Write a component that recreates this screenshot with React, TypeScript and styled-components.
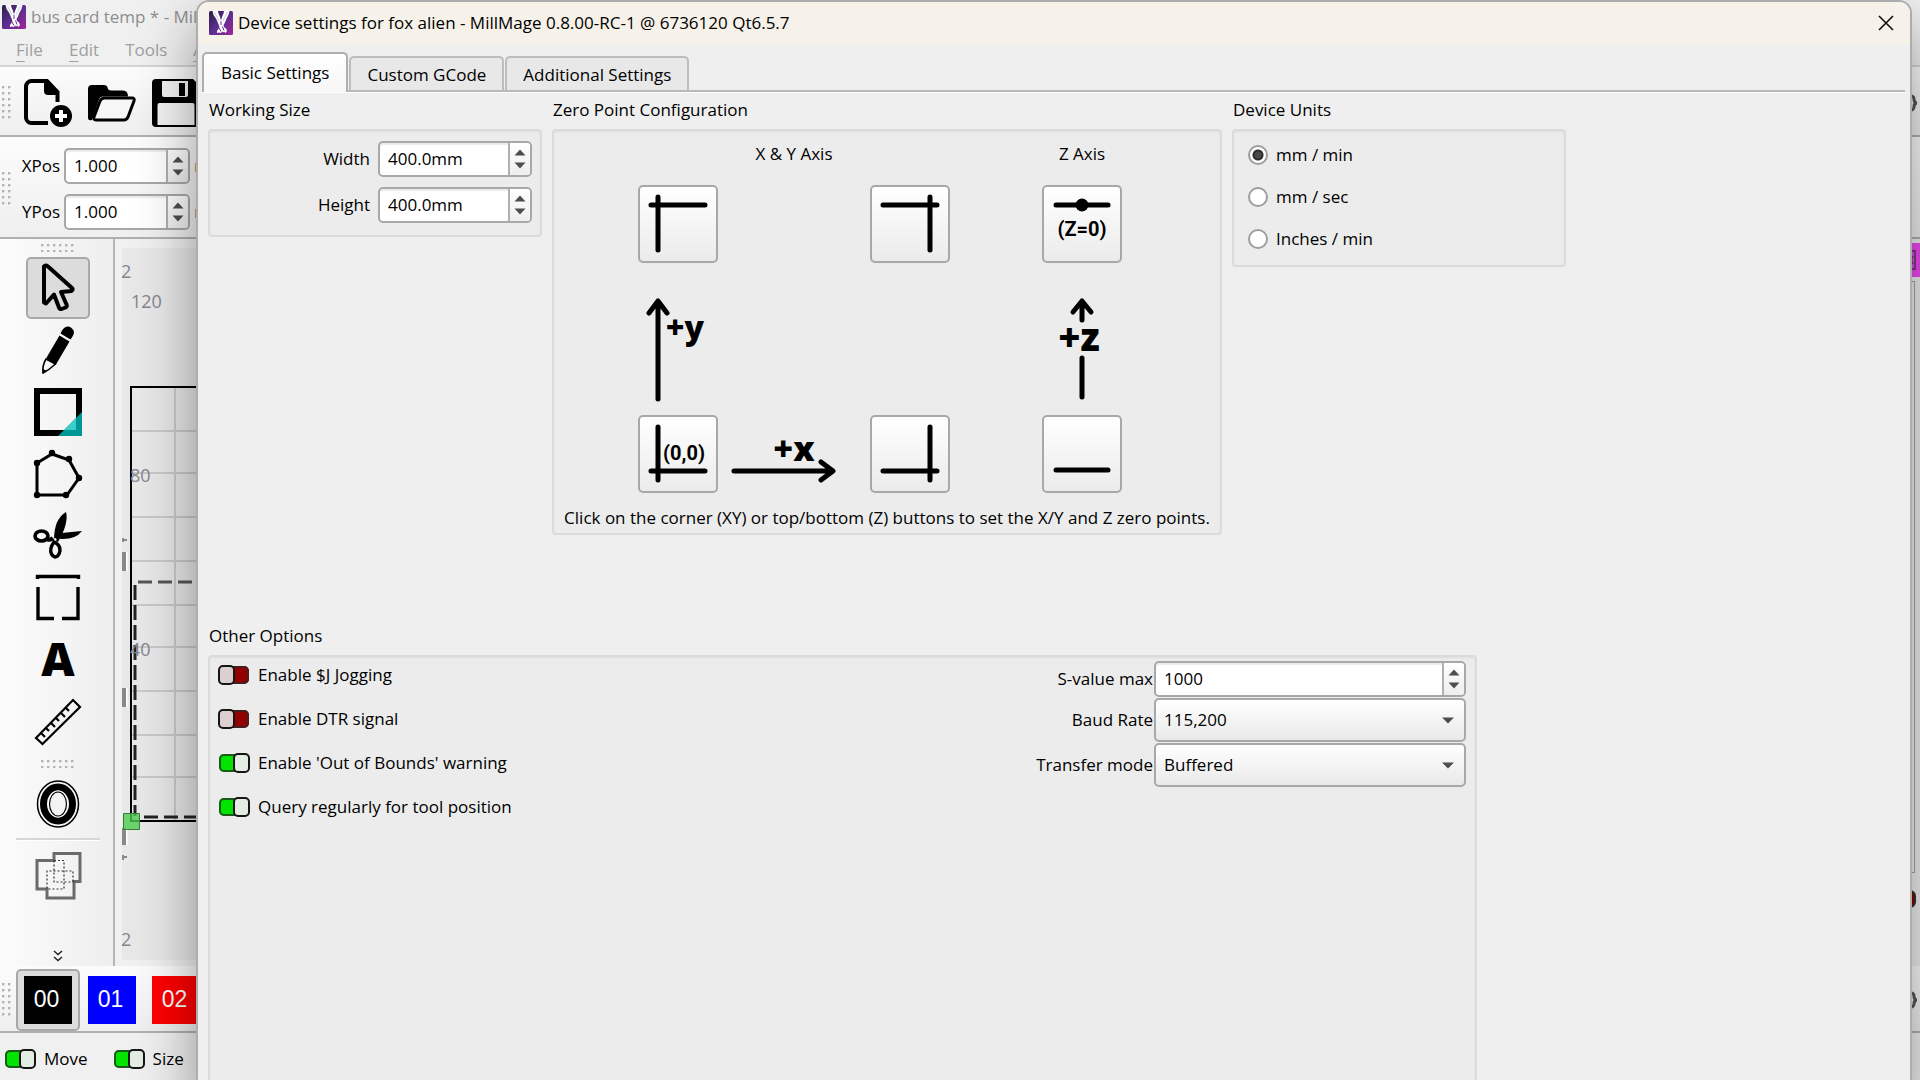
import React, { ReactNode } from "react";
import styled, { createGlobalStyle, css } from "styled-components";

const GlobalStyle = createGlobalStyle`
  *, *::before, *::after { box-sizing: border-box; }
  html, body { margin: 0; padding: 0; overflow: hidden; }
  body, button, input, select {
    font-family: "Open Sans", "Noto Sans", sans-serif;
    font-size: 17px;
    line-height: 24px;
    color: #000;
  }
  fieldset { border: 0; margin: 0; padding: 0; min-width: 0; }
  button { padding: 0; cursor: pointer; }
`;

/* ---------- main window ---------- */

const Desktop = styled.div`
  position: relative;
  height: 100vh;
  overflow: hidden;
  background: #f0f0f0;
`;

const MainWindow = styled.div`
  display: flex;
  flex-direction: column;
  height: 100%;
`;

const MainTitle = styled.header`
  display: flex;
  align-items: center;
  gap: 5px;
  height: 34px;
  padding-left: 2px;
  color: #8e8e8e;
  white-space: nowrap;
`;

const MenuBar = styled.nav`
  display: flex;
  align-items: center;
  gap: 26px;
  height: 33px;
  padding-left: 16px;
  border-bottom: 2px solid #d4d4d4;
`;

const MenuItem = styled.button`
  border: 0;
  background: none;
  color: #a0a0a0;
  u { text-underline-offset: 5px; text-decoration-thickness: 1px; }
`;

const Toolbar = styled.div<{ $height: number; $gap?: number }>`
  display: flex;
  align-items: center;
  gap: ${(p) => p.$gap ?? 12}px;
  height: ${(p) => p.$height}px;
  padding: 3px 2px 0;
  background: linear-gradient(#fcfcfc, #efefef);
  border-bottom: 2px solid #b0b0b0;
`;

const Handle = styled.div<{ $wide?: boolean }>`
  flex: none;
  width: ${(p) => (p.$wide ? 34 : 10)}px;
  height: ${(p) => (p.$wide ? 8 : 34)}px;
  background-image: radial-gradient(circle at 1px 1px, #b4b4b4 1px, transparent 2px);
  background-size: 6px 6px;
`;

const IconRow = styled.div`
  display: flex;
  gap: 16px;
`;

const IconButton = styled.button`
  display: block;
  width: 48px;
  height: 48px;
  border: 0;
  background: none;
`;

const Spring = styled.span`
  flex: 1;
`;

const PositionGrid = styled.div`
  display: grid;
  grid-template-columns: 48px 126px auto;
  gap: 10px 4px;
  align-items: center;
  label { text-align: right; }
`;

const Unit = styled.span`
  color: #7b6a52;
`;

const Workspace = styled.div`
  display: flex;
  flex: 1;
  min-height: 0;
`;

const ToolColumn = styled.div`
  display: flex;
  flex-direction: column;
  align-items: center;
  flex: none;
  width: 115px;
  padding: 5px 0 0 3px;
  background: linear-gradient(90deg, #fcfcfc, #eeeeee);
  border-right: 2px solid #b6b6b6;
`;

const ToolList = styled.div`
  display: flex;
  flex-direction: column;
  padding-top: 5px;
  margin-bottom: 7px;
  &:last-of-type { margin-bottom: 0; }
`;

const ToolButton = styled.button<{ $active?: boolean }>`
  display: grid;
  place-items: center;
  width: 64px;
  height: 62px;
  border: 2px solid ${(p) => (p.$active ? "#a8a8a8" : "transparent")};
  border-radius: 5px;
  background: ${(p) => (p.$active ? "#dcdcdc" : "none")};
`;

const Divider = styled.hr`
  width: 84px;
  height: 3px;
  margin: 3px 0;
  border: 0;
  background: #d6d6d6;
  border-bottom: 1px solid #fff;
`;

const CanvasFrame = styled.div`
  flex: 1;
  min-width: 0;
  margin: 9px 12px 6px 7px;
  background: #e8e8e8;
  svg { display: block; width: 100%; height: 100%; }
  text { font-size: 18px; fill: #85858d; }
`;

const Dock = styled.div`
  flex: none;
  width: 20px;
  padding-top: 4px;
`;

const DockTab = styled.div`
  display: flex;
  justify-content: flex-end;
  align-items: center;
  height: 34px;
  padding-right: 4px;
  margin-bottom: 4px;
  background: #f048f0;
`;

const DockList = styled.div`
  height: 592px;
  margin-right: 5px;
  border: 1px solid #a8a8a8;
  border-left: 0;
`;

const DockToggle = styled.div`
  width: 16px;
  height: 18px;
  margin: 17px 0;
  border: 2px solid #333;
  border-radius: 6px;
  background: #930000;
`;

const SwatchRow = styled.div`
  display: flex;
  flex: 1;
  padding-left: 4px;
`;

const SwatchButton = styled.button<{ $color: string; $active?: boolean }>`
  flex: none;
  width: 64px;
  height: 62px;
  padding: 5px 6px;
  border: 2px solid ${(p) => (p.$active ? "#a8a8a8" : "transparent")};
  border-radius: 5px;
  background: ${(p) => (p.$active ? "#dcdcdc" : "none")};
  span {
    display: block;
    width: 48px;
    height: 48px;
    background: ${(p) => p.$color};
    color: #fff;
    font: 23px/46px "Liberation Sans", sans-serif;
    text-align: center;
    padding-right: 3px;
  }
`;

const StatusBar = styled.footer`
  display: flex;
  align-items: center;
  gap: 25px;
  height: 47px;
  padding: 4px 0 0 4px;
`;

/* ---------- shared controls ---------- */

const SwitchLabel = styled.label`
  display: flex;
  align-items: center;
  gap: 8px;
  height: 36px;
  white-space: nowrap;
`;

const Switch = styled.input`
  appearance: none;
  display: flex;
  align-items: center;
  justify-content: flex-start;
  flex: none;
  width: 32px;
  height: 20px;
  margin: 0;
  border-radius: 6px;
  background: #930000 padding-box;
  border: 1px solid transparent;
  box-shadow: inset 0 0 0 2px #44201f;
  &::before {
    content: "";
    flex: none;
    width: 17px;
    height: 20px;
    margin: -1px;
    border: 2px solid #161616;
    border-radius: 5px;
    background: #dccfcf;
  }
  &:checked {
    justify-content: flex-end;
    background-color: #00e400;
    box-shadow: inset 0 0 0 2px #1d5a1d;
  }
  &:checked::before { background: #e4ede4; }
`;

const fieldFrame = css`
  border: 2px solid #a8a8a8;
  border-radius: 5px;
`;

const SpinFrame = styled.div`
  display: flex;
  height: 36px;
  background: #fff;
  overflow: hidden;
  box-shadow: inset 0 2px 1px #ececec;
  ${fieldFrame}
  input {
    flex: 1;
    min-width: 0;
    padding: 0 8px;
    border: 0;
    outline: 0;
    background: none;
  }
`;

const SpinButtons = styled.div`
  display: flex;
  flex-direction: column;
  width: 22px;
  border-left: 2px solid #b0b0b0;
  background: linear-gradient(#fff, #eee);
`;

const SpinButton = styled.button<{ $down?: boolean }>`
  display: flex;
  flex: 1;
  justify-content: center;
  align-items: ${(p) => (p.$down ? "flex-start" : "flex-end")};
  padding: 3px 0;
  border: 0;
  background: none;
  svg { display: block; transform: ${(p) => (p.$down ? "rotate(180deg)" : "none")}; }
`;

const SelectFrame = styled.div`
  display: grid;
  align-items: center;
  height: 44px;
  background: linear-gradient(#fff, #e9e9e9);
  ${fieldFrame}
  > * { grid-area: 1 / 1; }
  select {
    appearance: none;
    width: 100%;
    height: 100%;
    padding: 0 8px;
    border: 0;
    outline: 0;
    background: none;
  }
  svg { justify-self: end; margin-right: 10px; pointer-events: none; }
`;

/* ---------- dialog ---------- */

const Dialog = styled.section`
  position: absolute;
  inset: 0 8px -24px 196px;
  display: flex;
  flex-direction: column;
  border: 2px solid #adadad;
  border-radius: 13px;
  background: #efefef;
  overflow: hidden;
  box-shadow: 0 24px 60px rgba(0, 0, 0, 0.4);
`;

const DialogTitle = styled.header`
  display: flex;
  align-items: center;
  gap: 5px;
  height: 42px;
  padding-left: 11px;
  background: #f6f2e9;
  h1 { flex: 1; margin: 0; font-size: 17px; font-weight: 400; }
`;

const CloseButton = styled.button`
  display: grid;
  place-items: center;
  width: 49px;
  height: 42px;
  border: 0;
  background: none;
`;

const TabStrip = styled.div`
  display: flex;
  align-items: flex-end;
  gap: 1px;
  height: 48px;
  margin: 0 5px 0 4px;
  border-bottom: 2px solid #b9b9b9;
  box-shadow: 0 1px 0 #fff;
`;

const Tab = styled.button<{ $active?: boolean }>`
  padding: 0 16px;
  border: 2px solid #bdbdbd;
  border-bottom: 0;
  border-radius: 5px 5px 0 0;
  ${(p) =>
    p.$active
      ? css`
          height: 40px;
          padding: 0 17px;
          margin-bottom: -2px;
          background: linear-gradient(#fff, #f6f6f6);
          border-color: #aeaeae;
        `
      : css`
          height: 34px;
          padding-top: 2px;
          background: #e8e8e8;
        `}
`;

const Panels = styled.div`
  display: grid;
  grid-template-columns: minmax(auto, 334px) minmax(auto, 670px) minmax(auto, 334px);
  gap: 10px;
  align-items: start;
  padding-left: 10px;
  margin-bottom: 83px;
`;

const GroupTitle = styled.legend`
  height: 37px;
  padding: 0 1px;
  line-height: 35px;
`;

const frame = css`
  border: 2px solid #dbdbdb;
  border-radius: 4px;
  background: #ececec;
  box-shadow: inset 0 1px 2px #dedede;
`;

const SizeForm = styled.div`
  display: grid;
  grid-template-columns: 1fr 154px;
  gap: 10px 8px;
  align-items: center;
  padding: 10px 8px 12px;
  label { text-align: right; }
  ${frame}
`;

const ZeroFrame = styled.div`
  padding-bottom: 3px;
  text-align: center;
  ${frame}
  p { margin: 13px 0 0; white-space: nowrap; }
`;

const ZeroGrid = styled.div`
  display: grid;
  grid-template-columns: 80px 152px 80px 92px 80px;
  grid-template-rows: 54px 78px 152px 78px;
  align-items: center;
  justify-items: center;
  padding-left: 84px;
`;

const AxisHeading = styled.span<{ $span?: number }>`
  grid-column: span ${(p) => p.$span ?? 1};
  align-self: center;
  padding-bottom: 8px;
  white-space: nowrap;
`;

const ZeroButton = styled.button`
  display: grid;
  place-items: center;
  width: 80px;
  height: 78px;
  background: linear-gradient(#fff, #ebebeb);
  ${fieldFrame}
`;

const IconText = styled.text<{ $size: number; $heavy?: boolean }>`
  font-family: ${(p) => (p.$heavy ? '"Open Sans"' : "Roboto")}, sans-serif;
  font-size: ${(p) => p.$size}px;
  font-weight: ${(p) => (p.$heavy ? 800 : 700)};
  text-anchor: middle;
  fill: #000;
  stroke: none;
`;

const UnitFrame = styled.div`
  padding: 3px 14px 5px;
  ${frame}
`;

const RadioLabel = styled.label`
  display: flex;
  align-items: center;
  gap: 8px;
  height: 42px;
`;

const Radio = styled.input`
  appearance: none;
  width: 20px;
  height: 20px;
  margin: 0;
  border: 2px solid #9e9e9e;
  border-radius: 50%;
  background: #fff;
  &:checked { background: radial-gradient(circle, #484848 0 3px, #2c2c2c 4px, #2c2c2c 5px, #fff 6px); }
`;

const OtherOptions = styled.fieldset`
  display: flex;
  flex: 1;
  flex-direction: column;
  max-width: 1279px;
  padding-left: 10px;
`;

const OtherFrame = styled.div`
  display: flex;
  flex: 1;
  justify-content: space-between;
  align-items: flex-start;
  padding: 0 9px 0 8px;
  min-height: 440px;
  ${frame}
`;

const SwitchList = styled.div`
  display: flex;
  flex-direction: column;
  gap: 8px;
`;

const DeviceForm = styled.div`
  display: grid;
  grid-template-columns: auto 312px;
  gap: 1px;
  align-items: center;
  padding-top: 4px;
  label { text-align: right; }
`;

/* ---------- drawings ---------- */

const Triangle = () => (
  <svg width="12" height="7" viewBox="0 0 12 7" aria-hidden="true">
    <path d="M6 0.5 11.5 6.5H.5z" fill="#4d4d4d" />
  </svg>
);

const Logo = ({ id }: { id: string }) => (
  <svg width="24" height="24" viewBox="0 0 24 24" aria-hidden="true">
    <defs>
      <linearGradient id={id} x1="0" y1="0" x2="1" y2="1">
        <stop offset="0" stopColor="#2b1f45" />
        <stop offset=".5" stopColor="#5b2f8f" />
        <stop offset="1" stopColor="#a0249a" />
      </linearGradient>
    </defs>
    <rect width="24" height="24" rx="1.5" fill={`url(#${id})`} />
    <path
      d="M3.500 0H9l.5 2.500L11 6l1 3.500L13 6l1.500-3.500L15 0h5.500l-1 4-2 3.500-1.500 4-1.500 2.500.5 2 2 1.500 1 2.500-1.500 2-1.500-1.500-1 1-1-1-1 1.500-2-.5-2 .5v-2l1.500-2 1-2-1.500-4L7 7.500 4.500 4z"
      fill="#fff"
    />
    <path d="m10 17 2 3.500m1.500-5 1.500 4M12 10v4" stroke="#6a2c93" strokeWidth="1" fill="none" />
    <path d="m5.500 1 4.500 9M18.500 1 14 10" stroke="#b9b3c9" strokeWidth=".7" />
  </svg>
);

const Icon = ({ children }: { children: ReactNode }) => (
  <svg width="48" height="48" viewBox="0 0 48 48" fill="none" stroke="#000" strokeWidth="3" overflow="visible" aria-hidden="true">
    {children}
  </svg>
);

const NewFileIcon = () => (
  <Icon>
    <path d="M24 44H7.5A5.5 5.5 0 0 1 2 38.5V7.500A5.500 5.500 0 0 1 7.500 2H23l10.500 11v10" strokeWidth="4" />
    <path d="M20 1h3l12 12v3H24a4 4 0 0 1-4-4z" fill="#000" stroke="none" />
    <circle cx="37" cy="37" r="11" fill="#000" stroke="none" />
    <path d="M37 31v12M31 37h12" stroke="#fff" strokeWidth="4" />
  </Icon>
);

const OpenIcon = () => (
  <Icon>
    <path d="M0 39V10a4 4 0 0 1 4-4h12q3 0 3.500 2.500.5 3 3.500 3h12q5 0 5 6H15q-3 0-4 3L4 41q-4 1-4-2z" fill="#000" stroke="none" />
    <path d="M16.500 19H44q3 0 2 3l-6 16q-1.500 3-4 3H8q-3 0-2-3l6-16q1.500-3 4.500-3z" fill="#f6f6f6" />
  </Icon>
);

const SaveIcon = () => (
  <Icon>
    <path d="M4 0h37l7 7v37a4 4 0 0 1-4 4H4a4 4 0 0 1-4-4V4a4 4 0 0 1 4-4z" fill="#000" stroke="none" />
    <path d="M10 2h26v14q0 2-2 2H12q-2 0-2-2zM5.500 26q0-2 2-2h33q2 0 2 2v20h-37z" fill="#f4f4f4" stroke="none" />
    <path d="M27 4h6v13h-6z" fill="#000" stroke="none" />
  </Icon>
);

const ArrowIcon = () => (
  <Icon>
    <path
      d="M10 2.500v36l2 1 8-9 5 13q.5 2 2.500 1.500l4-1.500q2-1 1-3l-5.500-12.500 10.500-1q2-1.500.5-3L14 2.500q-2.500-2-4 0z"
      strokeWidth="4"
      strokeLinejoin="round"
    />
  </Icon>
);

const PencilIcon = () => (
  <Icon>
    <path d="M25.500 9.500 35.500 15.500 22 38.500 12 32.500zM26.500 7.500l1.500-3q4-6 9-3 5 4 1.500 9l-2 3z" fill="#000" stroke="none" />
    <path d="M12 33q-4 7-3 14 6-3 12.500-9z" strokeWidth="1.600" strokeLinejoin="round" />
    <path d="m8.500 48 .5-5 4 2z" fill="#000" stroke="none" />
  </Icon>
);

const RectIcon = () => (
  <Icon>
    <path d="M3 3h42v42H3z" strokeWidth="6" />
    <path d="M48 24v24H24z" fill="#009696" stroke="none" />
    <path d="M42 30v12H30z" fill="#3ccccc" stroke="none" />
  </Icon>
);

const PolygonIcon = () => (
  <Icon>
    <path d="M3 45h30l12-17-10-18-17-6L3 13z" />
    <g fill="#000" stroke="none">
      {[[3, 45], [32, 45], [45, 28], [35, 9], [18, 3], [3, 13]].map(([x, y]) => (
        <circle key={`${x}-${y}`} cx={x} cy={y} r="3.200" />
      ))}
    </g>
  </Icon>
);

const ScissorsIcon = () => (
  <Icon>
    <path d="M32 0q3 11-8 30l-4-2Q20 7 32 0zM48 19q-6 8-19 8h-3l2-6q9-1 20-2z" fill="#000" stroke="none" />
    <circle cx="21" cy="27.500" r="1.500" fill="#fff" stroke="none" />
    <ellipse cx="7.500" cy="24" rx="6.500" ry="5" strokeWidth="3.600" />
    <path d="M13 27q3 2 6-1" strokeWidth="4" />
    <path d="M20 30q-5 7-2.500 12 4 6 7.500 0 3-7-3-11z" strokeWidth="3.400" />
  </Icon>
);

const FrameIcon = () => (
  <Icon>
    <path d="M3.500 5V2.500h41V5M4 13v31.500h16M28 44.500h16V13" strokeWidth="3.400" />
  </Icon>
);

const LetterIcon = () => (
  <Icon>
    <IconText $size={46} $heavy x="24" y="40">A</IconText>
  </Icon>
);

const RulerIcon = () => (
  <Icon>
    <path d="M2 40 39 2l7 7L8.500 46zM7 35l4 4M12 30l3 3M17 25l4 4M22 20l3 3M27 15l4 4M32 10l3 3" strokeWidth="2.200" />
  </Icon>
);

const OffsetIcon = () => (
  <Icon>
    <ellipse cx="24" cy="24" rx="20.500" ry="23" strokeWidth="1.500" />
    <ellipse cx="24" cy="24" rx="14.500" ry="17" strokeWidth="7" />
    <ellipse cx="24" cy="24" rx="9.500" ry="13" strokeWidth="1.200" stroke="#fff" />
    <ellipse cx="24" cy="24" rx="8.500" ry="12" strokeWidth="1.200" fill="#f3f3f3" />
  </Icon>
);

const UnionIcon = () => (
  <Icon>
    <path d="M3 9.500h17V2.500h26v28h-6V47H13V38H3z" stroke="#6b6b6b" />
    <path d="M20 9.500h10V38H13V20h26v11M20 9.500V31h20" stroke="#333" strokeWidth="1.200" strokeDasharray="2 2" />
  </Icon>
);

const CutBracket = () => (
  <svg width="12" height="18" viewBox="0 0 12 18" fill="none" stroke="#555" strokeWidth="3" aria-hidden="true">
    <path d="M2 2q6-1 6 3t3 4q-3 0-3 4t-6 3" />
  </svg>
);

const Canvas = () => {
  const rows = [183, 225, 269, 313, 357, 399, 443, 487, 529];
  return (
    <svg aria-label="Work area">
      {rows.map((y) => (
        <path key={y} d={`M10 ${y}h2000`} stroke="#c9c9c9" strokeWidth="2" />
      ))}
      <path d="M53 139v434" stroke="#c9c9c9" strokeWidth="2" />
      <path d="M2000 139H9v434H2000" fill="none" stroke="#000" strokeWidth="2" />
      <path d="M13 337v231" stroke="#222" strokeWidth="3" strokeDasharray="15 5" />
      <path d="M16 334h1900" stroke="#555" strokeWidth="3" strokeDasharray="14 6" />
      <path d="M22 569h1900" stroke="#222" strokeWidth="3" strokeDasharray="14 6" />
      <text x="-1" y="30">2</text>
      <text x="9" y="60">120</text>
      <text x="8" y="234">80</text>
      <text x="8" y="408">40</text>
      <text x="-1" y="698">2</text>
      <path d="M2 304v19M2 440v19M2 580v17" stroke="#fff" strokeWidth="7" />
      <path d="M2 304v19M2 440v19M2 580v17" stroke="#888" strokeWidth="4" />
      <path d="M0 292h5M1 290v4M0 609h5M1 607v5" stroke="#888" strokeWidth="2" />
      <path d="M1.500 565.500h16v16h-16z" fill="#4ccc4c" fillOpacity=".8" stroke="#3a7a3a" />
    </svg>
  );
};

const ZeroIcon = ({ d, children }: { d: string; children?: ReactNode }) => (
  <svg width="64" height="62" viewBox="0 0 64 62" aria-hidden="true">
    <path d={d} fill="none" stroke="#000" strokeWidth="5" strokeLinecap="round" />
    {children}
  </svg>
);

const YArrow = () => (
  <svg width="80" height="126" viewBox="0 -22 80 126" role="img" aria-label="Y axis direction">
    <path d="M20 101V4M11 15l9-12 9 12" fill="none" stroke="#000" strokeWidth="5" strokeLinecap="round" strokeLinejoin="round" />
    <IconText $size={32} $heavy x="47" y="41">+y</IconText>
  </svg>
);

const XArrow = () => (
  <svg width="152" height="78" viewBox="0 0 152 78" role="img" aria-label="X axis direction">
    <path d="M16 56h98M103 47l12 9-12 9" fill="none" stroke="#000" strokeWidth="5" strokeLinecap="round" strokeLinejoin="round" />
    <IconText $size={34} $heavy x="76" y="46">+x</IconText>
  </svg>
);

const ZArrow = () => (
  <svg width="80" height="126" viewBox="0 -22 80 126" role="img" aria-label="Z axis direction">
    <path d="M40 22V3M31 14l9-11 9 11M40 60v39" fill="none" stroke="#000" strokeWidth="5" strokeLinecap="round" strokeLinejoin="round" />
    <IconText $size={38} $heavy x="37" y="53">+z</IconText>
  </svg>
);

/* ---------- composed controls ---------- */

const SpinBox = ({ id, value }: { id: string; value: string }) => (
  <SpinFrame>
    <input id={id} type="text" defaultValue={value} />
    <SpinButtons>
      <SpinButton type="button" aria-label="Increase"><Triangle /></SpinButton>
      <SpinButton type="button" $down aria-label="Decrease"><Triangle /></SpinButton>
    </SpinButtons>
  </SpinFrame>
);

const SelectBox = ({ id, options }: { id: string; options: string[] }) => (
  <SelectFrame>
    <select id={id}>
      {options.map((o) => <option key={o}>{o}</option>)}
    </select>
    <svg width="12" height="7" viewBox="0 0 12 7" aria-hidden="true">
      <path d="M0 .5h12L6 6.500z" fill="#4d4d4d" />
    </svg>
  </SelectFrame>
);

const SwitchField = ({ label, on }: { label: string; on?: boolean }) => (
  <SwitchLabel>
    <Switch type="checkbox" defaultChecked={on} />
    {label}
  </SwitchLabel>
);

const tools: [string, () => React.JSX.Element][] = [
  ["Select", ArrowIcon],
  ["Draw lines", PencilIcon],
  ["Rectangle", RectIcon],
  ["Polygon", PolygonIcon],
  ["Trim", ScissorsIcon],
  ["Tabs", FrameIcon],
  ["Text", LetterIcon],
  ["Measure", RulerIcon],
];

const swatches = [
  ["00", "#000000"],
  ["01", "#0000ff"],
  ["02", "#ff0000"],
];

export default function App() {
  return (
    <Desktop>
      <GlobalStyle />
      <MainWindow>
        <MainTitle><Logo id="logo-main" />bus card temp * - MillMage</MainTitle>
        <MenuBar>
          <MenuItem><u>F</u>ile</MenuItem>
          <MenuItem><u>E</u>dit</MenuItem>
          <MenuItem>Tools</MenuItem>
          <MenuItem><u>A</u>rrange</MenuItem>
        </MenuBar>
        <Toolbar $height={70}>
          <Handle />
          <IconRow>
            <IconButton aria-label="New"><NewFileIcon /></IconButton>
            <IconButton aria-label="Open"><OpenIcon /></IconButton>
            <IconButton aria-label="Save"><SaveIcon /></IconButton>
          </IconRow>
          <Spring />
          <CutBracket />
        </Toolbar>
        <Toolbar $height={102} $gap={0}>
          <Handle />
          <PositionGrid>
            <label htmlFor="xpos">XPos</label>
            <SpinBox id="xpos" value="1.000" />
            <Unit>mm</Unit>
            <label htmlFor="ypos">YPos</label>
            <SpinBox id="ypos" value="1.000" />
            <Unit>mm</Unit>
          </PositionGrid>
        </Toolbar>
        <Workspace>
          <ToolColumn>
            <Handle $wide />
            <ToolList>
              {tools.map(([name, Glyph], i) => (
                <ToolButton key={name} aria-label={name} $active={i === 0}><Glyph /></ToolButton>
              ))}
            </ToolList>
            <Handle $wide />
            <ToolList>
              <ToolButton aria-label="Offset"><OffsetIcon /></ToolButton>
            </ToolList>
            <Divider />
            <ToolButton aria-label="Weld"><UnionIcon /></ToolButton>
            <Spring />
            <svg width="10" height="17" viewBox="0 0 10 17" fill="none" stroke="#222" strokeWidth="1.500" aria-hidden="true">
              <path d="m1 2 4 3.500L9 2M1 8l4 3.500L9 8" />
            </svg>
          </ToolColumn>
          <CanvasFrame><Canvas /></CanvasFrame>
          <Dock>
            <DockTab>
              <svg width="8" height="20" viewBox="0 0 8 20" fill="none" stroke="#7d3a86" strokeWidth="2" aria-hidden="true">
                <path d="M1 1h6v18H1M1 6l4 8M5 6l-4 8" />
              </svg>
            </DockTab>
            <DockList />
            <DockToggle />
          </Dock>
        </Workspace>
        <Toolbar $height={67} $gap={0}>
          <Handle />
          <SwatchRow>
            {swatches.map(([n, c], i) => (
              <SwatchButton key={n} $color={c} $active={i === 0}><span>{n}</span></SwatchButton>
            ))}
          </SwatchRow>
          <CutBracket />
        </Toolbar>
        <StatusBar>
          <SwitchField label="Move" on />
          <SwitchField label="Size" on />
        </StatusBar>
      </MainWindow>

      <Dialog role="dialog" aria-labelledby="dialog-title">
        <DialogTitle>
          <Logo id="logo-dialog" />
          <h1 id="dialog-title">Device settings for fox alien - MillMage 0.8.00-RC-1 @ 6736120 Qt6.5.7</h1>
          <CloseButton aria-label="Close">
            <svg width="16" height="16" viewBox="0 0 16 16" stroke="#111" strokeWidth="1.600" aria-hidden="true">
              <path d="m1 1 14 14M15 1 1 15" />
            </svg>
          </CloseButton>
        </DialogTitle>
        <TabStrip role="tablist">
          <Tab role="tab" aria-selected $active>Basic Settings</Tab>
          <Tab role="tab">Custom GCode</Tab>
          <Tab role="tab">Additional Settings</Tab>
        </TabStrip>
        <Panels>
          <fieldset>
            <GroupTitle>Working Size</GroupTitle>
            <SizeForm>
              <label htmlFor="width">Width</label>
              <SpinBox id="width" value="400.0mm" />
              <label htmlFor="height">Height</label>
              <SpinBox id="height" value="400.0mm" />
            </SizeForm>
          </fieldset>
          <fieldset>
            <GroupTitle>Zero Point Configuration</GroupTitle>
            <ZeroFrame>
              <ZeroGrid>
                <AxisHeading $span={3}>X &amp; Y Axis</AxisHeading>
                <span />
                <AxisHeading>Z Axis</AxisHeading>
                <ZeroButton aria-label="Back left">
                  <ZeroIcon d="M5 12H59M12 4V57" />
                </ZeroButton>
                <span />
                <ZeroButton aria-label="Back right">
                  <ZeroIcon d="M5 12H59M52 4V57" />
                </ZeroButton>
                <span />
                <ZeroButton aria-label="Top">
                  <ZeroIcon d="M6 12H58">
                    <circle cx="32" cy="12" r="6.500" />
                    <IconText $size={20} x="32" y="43">(Z=0)</IconText>
                  </ZeroIcon>
                </ZeroButton>
                <YArrow />
                <span />
                <span />
                <span />
                <ZArrow />
                <ZeroButton aria-label="Front left">
                  <ZeroIcon d="M5 48H59M12 4V57">
                    <IconText $size={20} x="38" y="37">(0,0)</IconText>
                  </ZeroIcon>
                </ZeroButton>
                <XArrow />
                <ZeroButton aria-label="Front right">
                  <ZeroIcon d="M5 48H59M52 4V57" />
                </ZeroButton>
                <span />
                <ZeroButton aria-label="Bottom">
                  <ZeroIcon d="M6 47H58" />
                </ZeroButton>
              </ZeroGrid>
              <p>Click on the corner (XY) or top/bottom (Z) buttons to set the X/Y and Z zero points.</p>
            </ZeroFrame>
          </fieldset>
          <fieldset>
            <GroupTitle>Device Units</GroupTitle>
            <UnitFrame>
              {["mm / min", "mm / sec", "Inches / min"].map((u, i) => (
                <RadioLabel key={u}>
                  <Radio type="radio" name="units" defaultChecked={i === 0} />
                  {u}
                </RadioLabel>
              ))}
            </UnitFrame>
          </fieldset>
        </Panels>
        <OtherOptions>
          <GroupTitle>Other Options</GroupTitle>
          <OtherFrame>
            <SwitchList>
              <SwitchField label="Enable $J Jogging" />
              <SwitchField label="Enable DTR signal" />
              <SwitchField label="Enable 'Out of Bounds' warning" on />
              <SwitchField label="Query regularly for tool position" on />
            </SwitchList>
            <DeviceForm>
              <label htmlFor="svalue">S-value max</label>
              <SpinBox id="svalue" value="1000" />
              <label htmlFor="baud">Baud Rate</label>
              <SelectBox id="baud" options={["115,200"]} />
              <label htmlFor="mode">Transfer mode</label>
              <SelectBox id="mode" options={["Buffered"]} />
            </DeviceForm>
          </OtherFrame>
        </OtherOptions>
      </Dialog>
    </Desktop>
  );
}
